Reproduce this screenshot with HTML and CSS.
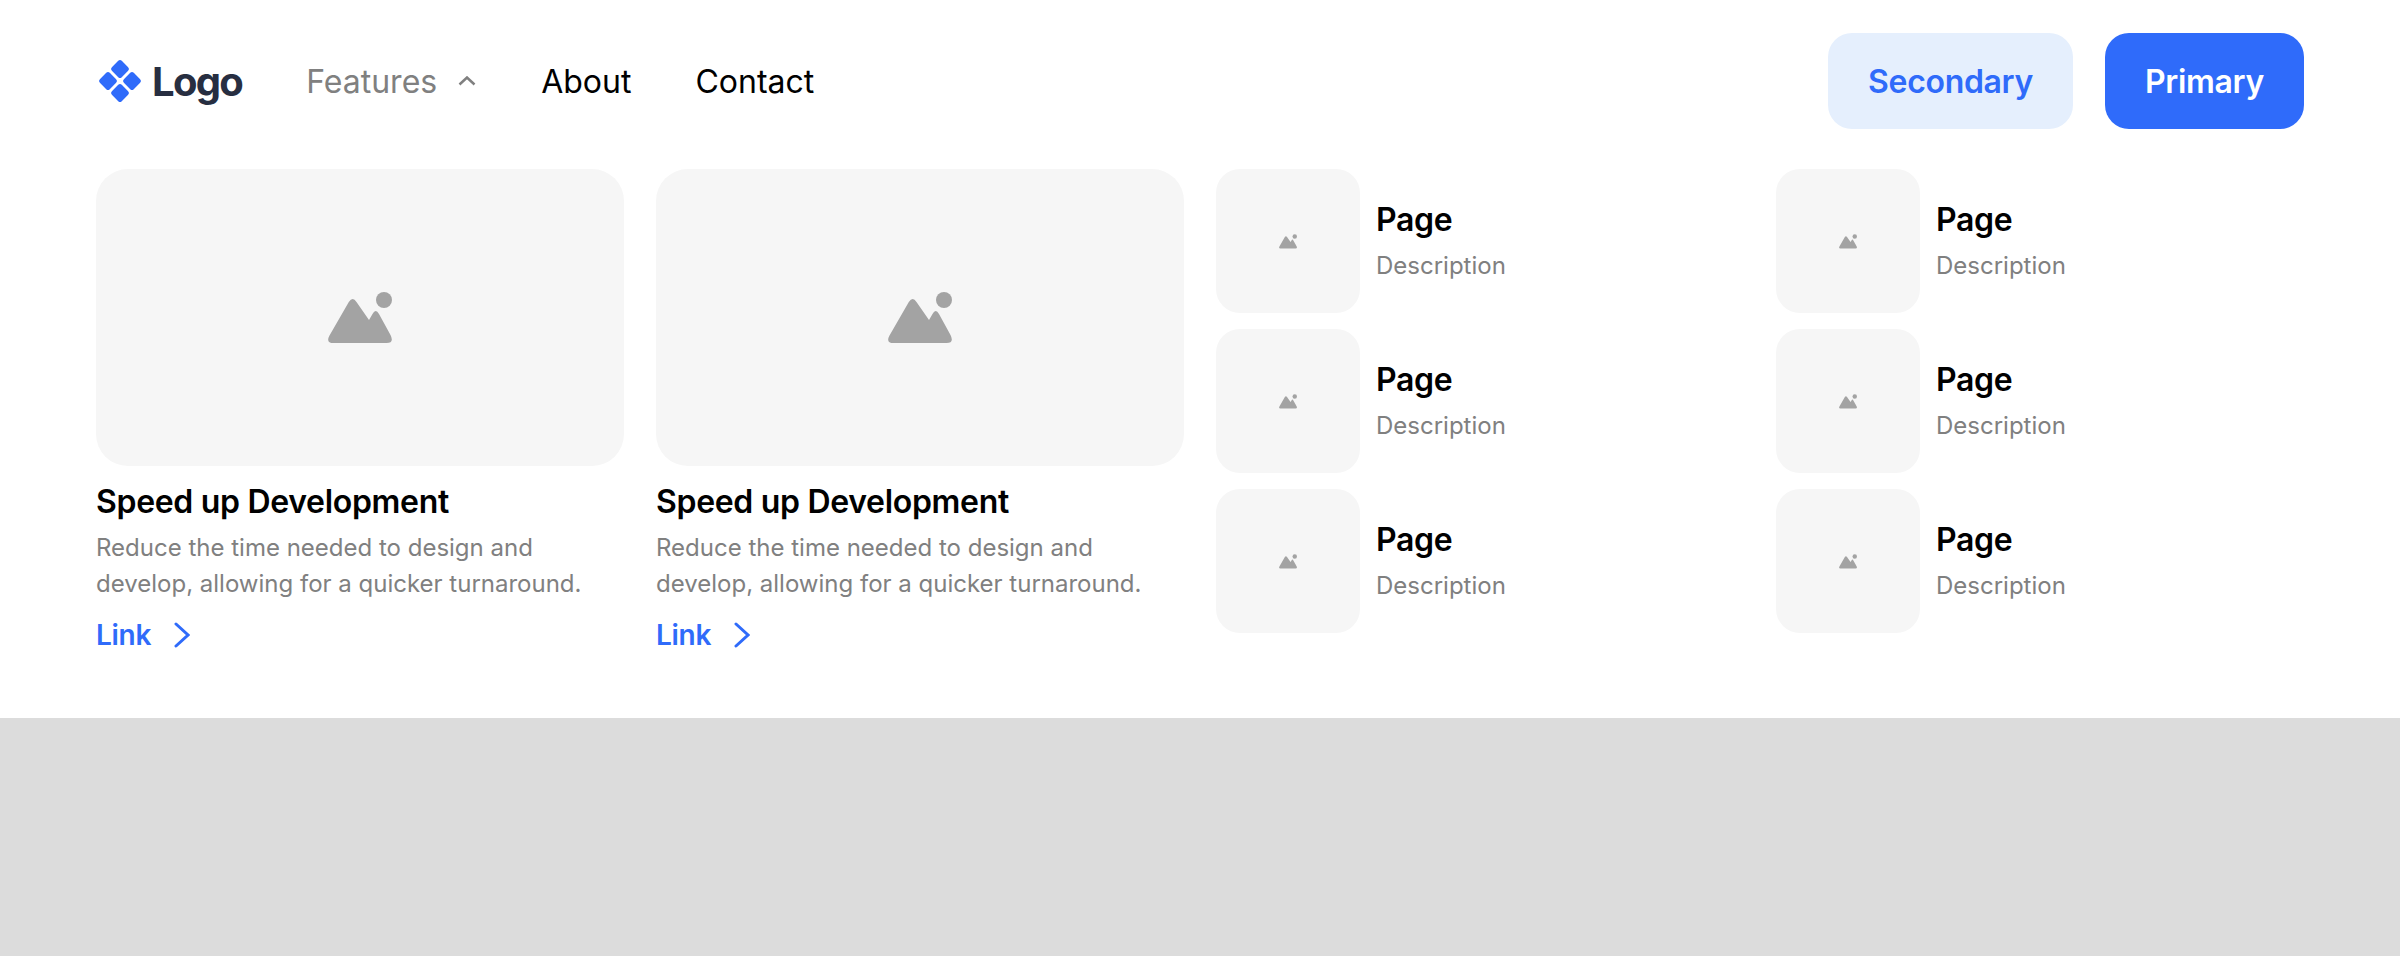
FILE: index.html
```html
<!DOCTYPE html>
<html lang="en">
<head>
<meta charset="utf-8">
<title>Navigation</title>
<link rel="stylesheet" href="styles.css">
</head>
<body>
<svg class="defs" width="0" height="0" aria-hidden="true">
  <symbol id="pic" viewBox="0 0 64 52">
    <circle cx="56" cy="8" r="8"/>
    <path d="M1.500 43.500 20.800 10Q24.700 4 28.500 10L41 28 44.500 22Q47.700 16 51 22L62.500 43Q66.500 51 58.500 51H5.500Q-2.500 51 1.500 43.500Z"/>
  </symbol>
</svg>
<div class="panel">
  <header class="nav">
    <div class="nav-left">
      <a class="logo">
        <svg class="logo-mark" viewBox="0 0 48 48">
          <rect x="17" y="5" width="14" height="14" rx="2.500" transform="rotate(45 24 12)"/>
          <rect x="5" y="17" width="14" height="14" rx="2.500" transform="rotate(45 12 24)"/>
          <rect x="29" y="17" width="14" height="14" rx="2.500" transform="rotate(45 36 24)"/>
          <rect x="17" y="29" width="14" height="14" rx="2.500" transform="rotate(45 24 36)"/>
        </svg>
        <span>Logo</span>
      </a>
      <nav class="links">
        <a class="link-open">Features
          <svg class="caret" viewBox="0 0 19 10"><path d="M1.500 8.500 9 1.500l7.500 7"/></svg>
        </a>
        <a>About</a>
        <a>Contact</a>
      </nav>
    </div>
    <div class="actions">
      <button class="btn btn-secondary">Secondary</button>
      <button class="btn btn-primary">Primary</button>
    </div>
  </header>
  <div class="menu">
    <article class="card">
      <div class="thumb thumb-large"><svg class="pic pic-large"><use href="#pic"/></svg></div>
      <h3>Speed up Development</h3>
      <p>Reduce the time needed to design and develop, allowing for a quicker turnaround.</p>
      <a class="more">Link <svg class="chev" viewBox="0 0 16 26"><path d="M2 2l12 11L2 24"/></svg></a>
    </article>
    <article class="card">
      <div class="thumb thumb-large"><svg class="pic pic-large"><use href="#pic"/></svg></div>
      <h3>Speed up Development</h3>
      <p>Reduce the time needed to design and develop, allowing for a quicker turnaround.</p>
      <a class="more">Link <svg class="chev" viewBox="0 0 16 26"><path d="M2 2l12 11L2 24"/></svg></a>
    </article>
    <div class="pages">
      <a class="page"><div class="thumb thumb-small"><svg class="pic pic-small"><use href="#pic"/></svg></div><div class="page-text"><h4>Page</h4><span>Description</span></div></a>
      <a class="page"><div class="thumb thumb-small"><svg class="pic pic-small"><use href="#pic"/></svg></div><div class="page-text"><h4>Page</h4><span>Description</span></div></a>
      <a class="page"><div class="thumb thumb-small"><svg class="pic pic-small"><use href="#pic"/></svg></div><div class="page-text"><h4>Page</h4><span>Description</span></div></a>
    </div>
    <div class="pages">
      <a class="page"><div class="thumb thumb-small"><svg class="pic pic-small"><use href="#pic"/></svg></div><div class="page-text"><h4>Page</h4><span>Description</span></div></a>
      <a class="page"><div class="thumb thumb-small"><svg class="pic pic-small"><use href="#pic"/></svg></div><div class="page-text"><h4>Page</h4><span>Description</span></div></a>
      <a class="page"><div class="thumb thumb-small"><svg class="pic pic-small"><use href="#pic"/></svg></div><div class="page-text"><h4>Page</h4><span>Description</span></div></a>
    </div>
  </div>
</div>
</body>
</html>
```
FILE: styles.css
```css
* { box-sizing: border-box; }
html, body { margin: 0; height: 100%; }
body { background: #dcdcdc; font-family: Inter, "Liberation Sans", sans-serif; color: #000; overflow: hidden; }
.defs { position: absolute; }
.panel { background: #fff; height: 718px; padding: 0 96px; }
.nav { height: 169px; padding-top: 33px; display: flex; justify-content: space-between; align-items: flex-start; }
.nav-left { height: 96px; display: flex; align-items: center; gap: 64px; }
.logo { display: flex; align-items: center; gap: 8px; font-size: 40px; font-weight: 700; color: #272e41; letter-spacing: -1.7px; }
.logo-mark { width: 48px; height: 48px; fill: #2f6bfa; }
.links { display: flex; gap: 64px; font-size: 32px; }
.links a { display: flex; align-items: center; gap: 21px; }
.link-open { color: #808080; }
.caret { width: 19px; height: 10px; fill: none; stroke: #808080; stroke-width: 2.500; }
.actions { display: flex; gap: 32px; }
.btn { height: 96px; padding: 0 40px; border: 0; border-radius: 24px; font: 600 32px Inter, "Liberation Sans", sans-serif; letter-spacing: -0.32px; }
.btn-secondary { background: #e5effd; color: #2f6bfa; }
.btn-primary { background: #2f6bfa; color: #fff; }
.menu { display: grid; grid-template-columns: repeat(4, 1fr); gap: 32px; }
.thumb { display: flex; align-items: center; justify-content: center; background: #f6f6f6; }
.thumb-large { height: 297px; border-radius: 32px; }
.thumb-small { width: 144px; height: 144px; flex: none; border-radius: 24px; }
.pic { fill: #a3a3a3; }
.pic-large { width: 64px; height: 52px; margin-top: 1px; }
.pic-small { width: 18px; height: 15px; }
.card h3 { margin: 14px 0 0; font-size: 32px; line-height: 44px; font-weight: 600; letter-spacing: -0.32px; }
.card p { margin: 6px 0 0; font-size: 24px; line-height: 36px; color: #808080; }
.more { margin-top: 15px; display: flex; align-items: center; gap: 23px; font-size: 28px; line-height: 36px; font-weight: 600; color: #2f6bfa; letter-spacing: -0.28px; }
.chev { width: 16px; height: 26px; fill: none; stroke: #2f6bfa; stroke-width: 3; stroke-linecap: round; }
.pages { display: flex; flex-direction: column; gap: 16px; }
.page { display: flex; align-items: center; gap: 16px; }
.page-text { padding-top: 2px; }
.page h4 { margin: 0 0 8px; font-size: 32px; line-height: 40px; font-weight: 600; letter-spacing: -0.32px; }
.page span { display: block; font-size: 24px; line-height: 36px; color: #808080; }
```
